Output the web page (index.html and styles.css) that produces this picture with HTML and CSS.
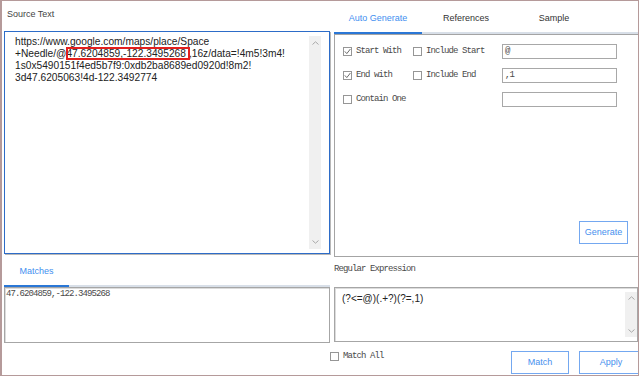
FILE: index.html
```html
<!DOCTYPE html>
<html>
<head>
<meta charset="utf-8">
<title>Regex Tool</title>
<link rel="stylesheet" href="styles.css">
</head>
<body>
<div class="window">
  <div class="left-top">
    <div class="label-source">Source Text</div>
    <div class="source-box">
      <div class="source-text">https://www.google.com/maps/place/Space<br>+Needle/@<span class="hl">47.6204859,-122.3495268</span>,16z/data=!4m5!3m4!<br>1s0x5490151f4ed5b7f9:0xdb2ba8689ed0920d!8m2!<br>3d47.6205063!4d-122.3492774</div>
      <div class="scrollbar">
        <svg class="chev" width="7" height="4" viewBox="0 0 7 4"><polyline points="0.5,3.5 3.5,0.8 6.5,3.5" /></svg>
        <svg class="chev" width="7" height="4" viewBox="0 0 7 4"><polyline points="0.5,0.5 3.5,3.2 6.5,0.5" /></svg>
      </div>
    </div>
    <div class="tabstrip left-strip">
      <div class="tab tab-matches active">Matches</div>
    </div>
  </div>

  <div class="right-top">
    <div class="tabstrip right-strip">
      <div class="tab active">Auto Generate</div>
      <div class="tab">References</div>
      <div class="tab">Sample</div>
    </div>
    <div class="tab-panel">
      <div class="opt-row">
        <label class="opt col1"><span class="cb"><svg width="7" height="7" viewBox="0 0 7 7"><polyline points="0.8,3.4 2.8,5.6 6.4,1" /></svg></span><span class="mono">Start With</span></label>
        <label class="opt col2"><span class="cb"></span><span class="mono">Include Start</span></label>
        <div class="field mono">@</div>
      </div>
      <div class="opt-row">
        <label class="opt col1"><span class="cb"><svg width="7" height="7" viewBox="0 0 7 7"><polyline points="0.8,3.4 2.8,5.6 6.4,1" /></svg></span><span class="mono">End with</span></label>
        <label class="opt col2"><span class="cb"></span><span class="mono">Include End</span></label>
        <div class="field mono">,1</div>
      </div>
      <div class="opt-row">
        <label class="opt col1 wide"><span class="cb"></span><span class="mono">Contain One</span></label>
        <div class="field mono"></div>
      </div>
      <div class="btn gen">Generate</div>
    </div>
    <div class="label-regex mono">Regular Expression</div>
  </div>

  <div class="matches-box mono">47.6204859,-122.3495268</div>

  <div class="regex-box">
    <div class="regex-text">(?&lt;=@)(.+?)(?=,1)</div>
    <div class="scrollbar small">
      <svg class="chev" width="7" height="4" viewBox="0 0 7 4"><polyline points="0.5,3.5 3.5,0.8 6.5,3.5" /></svg>
      <svg class="chev" width="7" height="4" viewBox="0 0 7 4"><polyline points="0.5,0.5 3.5,3.2 6.5,0.5" /></svg>
    </div>
  </div>

  <div class="bottom-row">
    <label class="opt matchall"><span class="cb"></span><span class="mono">Match All</span></label>
    <div class="btn match">Match</div>
    <div class="btn apply">Apply</div>
  </div>
</div>
</body>
</html>
```

FILE: styles.css
```css
* { box-sizing: border-box; }
html, body { margin: 0; padding: 0; background: #fff; }
body { font-family: "Liberation Sans", Arial, sans-serif; color: #333; }

.window {
  width: 639px;
  height: 376px;
  border-style: solid;
  border-color: #b59a9a;
  border-width: 1px 1px 1px 2px;
  overflow: hidden;
  display: grid;
  grid-template-columns: 332px 304px;
  grid-template-rows: 286px 56px 32px;
  background: #fff;
}

.mono {
  font-family: "Liberation Mono", "Courier New", monospace;
  font-size: 9px;
  letter-spacing: -0.9px;
  color: #4a4a4a;
}

/* left top column */
.left-top { display: flex; flex-direction: column; padding-left: 2px; }
.label-source {
  height: 30px;
  padding: 8px 0 0 3px;
  font-size: 9px;
  line-height: 11px;
  color: #444;
}
.source-box {
  width: 326px;
  height: 223px;
  border: 1px solid #2d6cc8;
  box-shadow: 1px 1px 0 #b8b8b8;
  display: flex;
}
.source-text {
  flex: 1;
  padding: 4px 0 0 10px;
  font-size: 10.2px;
  line-height: 12px;
  color: #222;
  white-space: nowrap;
}
.hl {
  outline: 2px solid #e3201e;
  outline-offset: -2px;
  padding: 1px 4px 1px 0;
  margin-right: -1px;
}
.scrollbar {
  width: 12px;
  margin: 4px 8px 4px 0;
  background: #f0f0f0;
  display: flex;
  flex-direction: column;
  justify-content: space-between;
  align-items: center;
  padding: 5px 0 5px;
}
.scrollbar.small { margin: 4px 0 4px 0; padding: 4px 0 4px; }
.chev polyline { fill: none; stroke: #a8a8a8; stroke-width: 1; }

/* tabs */
.tabstrip {
  display: flex;
  border-bottom: 2px solid #d8dfe8;
}
.left-strip { height: 33px; width: 326px; }
.right-strip { height: 33px; }
.tab {
  width: 88px;
  height: 33px;
  margin-bottom: -2px;
  padding-top: 12px;
  font-size: 9px;
  line-height: 11px;
  text-align: center;
  color: #333;
  border-bottom: 2px solid transparent;
}
.tab.active { color: #3f8ff0; border-bottom-color: #2a77d6; }
.tab-matches { width: 65px; padding-top: 12px; }

/* right top column */
.right-top { display: flex; flex-direction: column; }
.tab-panel {
  height: 223px;
  border: 1px solid #a4a4a4;
  border-right: none;
  display: flex;
  flex-direction: column;
  padding: 4px 0 0 8px;
}
.opt-row { display: flex; align-items: center; height: 24px; }
.opt { display: flex; align-items: center; gap: 4px; }
.col1 { width: 70px; }
.col2 { width: 89px; }
.col1.wide { width: 159px; }
.cb {
  width: 9px;
  height: 9px;
  border: 1px solid #969696;
  background: #fff;
  flex: none;
  display: flex;
  align-items: center;
  justify-content: center;
}
.cb svg polyline { fill: none; stroke: #6a6a6a; stroke-width: 1; }
.field {
  width: 115px;
  height: 15px;
  border: 1px solid #a8a8a8;
  padding-left: 2px;
  line-height: 12px;
}

.btn {
  border: 1px solid #74a8f0;
  background: #fff;
  color: #4790ee;
  font-size: 9px;
  line-height: 21px;
  text-align: center;
  height: 23px;
}
.gen {
  width: 49px;
  align-self: flex-end;
  margin: auto 10px 12px auto;
}
.label-regex {
  height: 30px;
  padding-top: 7px;
  line-height: 11px;
}

/* row 2 */
.matches-box {
  margin-left: 2px;
  width: 326px;
  height: 56px;
  border: 1px solid #a6a6a6;
  box-shadow: inset 1px 1px 0 #dcdcdc;
  padding: 1px 1px 0 1px;
  line-height: 10px;
}
.regex-box {
  width: 304px;
  height: 55px;
  border: 1px solid #a6a6a6;
  box-shadow: inset 1px 1px 0 #dcdcdc;
  display: flex;
}
.regex-text {
  flex: 1;
  padding: 5px 0 0 7px;
  font-size: 10px;
  line-height: 12px;
  color: #222;
}

/* row 3 */
.bottom-row {
  grid-column: 1 / 3;
  display: flex;
  align-items: flex-start;
  padding-left: 328px;
  margin-right: -5px;
}
.matchall { margin-top: 9px; }
.matchall .mono { line-height: 9px; }
.match { width: 58px; margin: 8px 0 0 auto; }
.apply { width: 64px; margin: 8px 0 0 10px; }
```
